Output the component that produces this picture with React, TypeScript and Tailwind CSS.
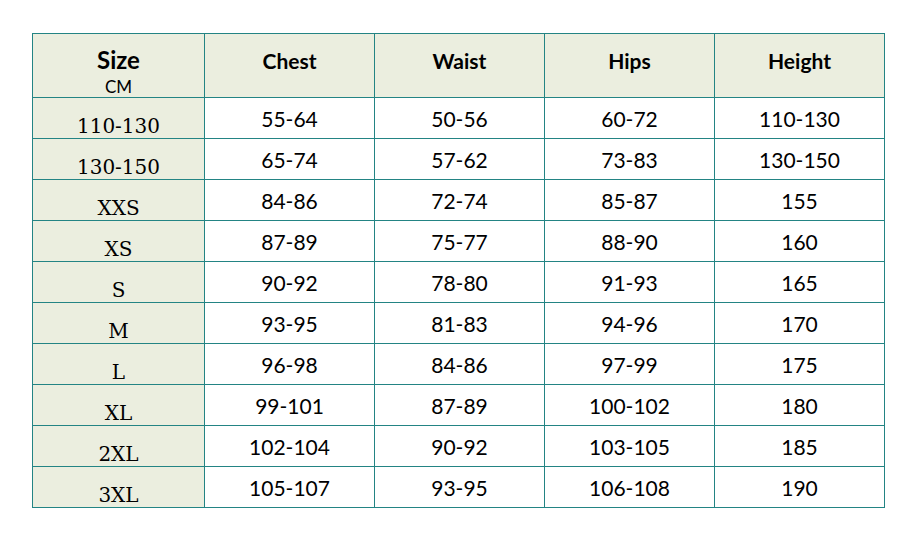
import React from "react";

const rows: [string, string, string, string, string][] = [
  ["110-130", "55-64", "50-56", "60-72", "110-130"],
  ["130-150", "65-74", "57-62", "73-83", "130-150"],
  ["XXS", "84-86", "72-74", "85-87", "155"],
  ["XS", "87-89", "75-77", "88-90", "160"],
  ["S", "90-92", "78-80", "91-93", "165"],
  ["M", "93-95", "81-83", "94-96", "170"],
  ["L", "96-98", "84-86", "97-99", "175"],
  ["XL", "99-101", "87-89", "100-102", "180"],
  ["2XL", "102-104", "90-92", "103-105", "185"],
  ["3XL", "105-107", "93-95", "106-108", "190"],
];

export default function App() {
  return (
    <div className="w-[915px] h-[533px] bg-white overflow-hidden pt-[33px] pl-[32px] font-['Lato',sans-serif]">
      <div className="w-[853px] grid grid-cols-[171px_169px_169px_169px_169px] grid-rows-[63px_repeat(10,40px)] gap-px p-px bg-[#238484] text-black">
        <div className="bg-[#ebeedf] flex flex-col items-center pt-[11px]">
          <div className="text-[24px] font-bold leading-[29px]">Size</div>
          <div className="text-[17px] leading-[21px] mt-[2px]">CM</div>
        </div>
        {["Chest", "Waist", "Hips", "Height"].map((h) => (
          <div key={h} className="bg-[#ebeedf] flex justify-center pt-[14px] text-[21px] leading-[25px] font-bold">
            {h}
          </div>
        ))}
        {rows.map((r) => (
          <React.Fragment key={r[0]}>
            <div className="bg-[#ebeedf] flex justify-center pt-[18px] text-[20px] leading-[20px] font-['DejaVu_Serif',serif]">
              {r[0]}
            </div>
            {r.slice(1).map((c, i) => (
              <div key={i} className="bg-white flex justify-center pt-[8px] text-[21px] leading-[25px]">
                {c}
              </div>
            ))}
          </React.Fragment>
        ))}
      </div>
    </div>
  );
}
